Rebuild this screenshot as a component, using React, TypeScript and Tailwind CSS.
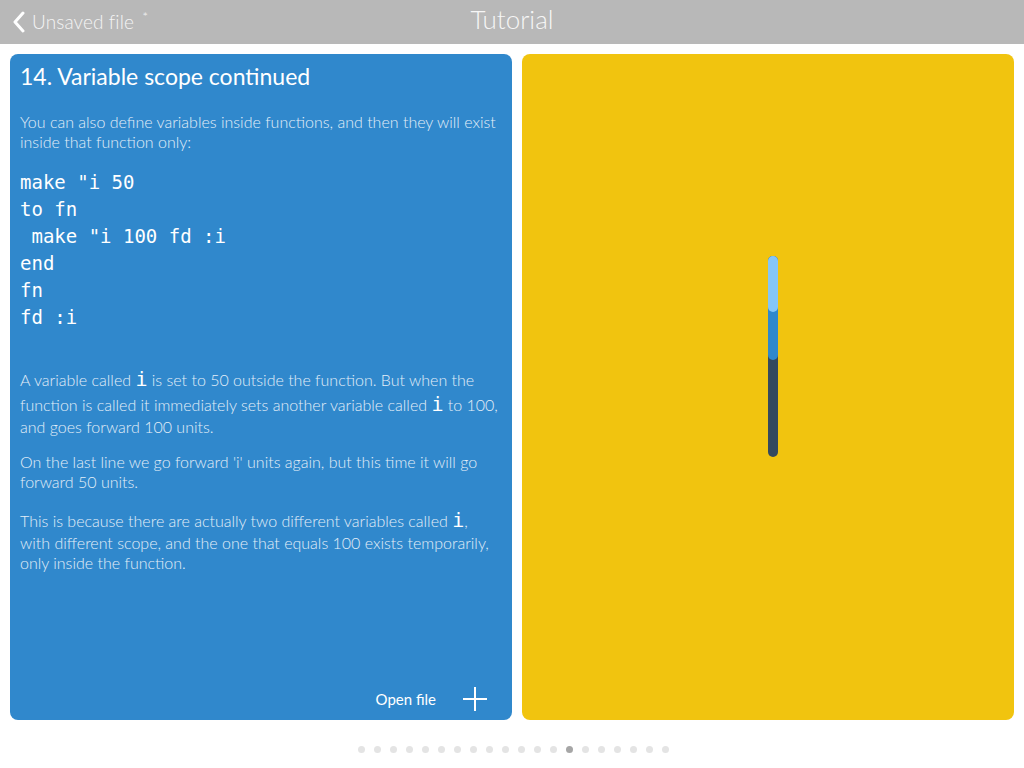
import React from "react";

const lato = { fontFamily: "Lato, 'Open Sans', sans-serif" };

function MonoI() {
  return (
    <span className="text-[20px] leading-[25px] text-white" style={{ fontFamily: "'DejaVu Sans Mono', monospace" }}>
      i
    </span>
  );
}

export default function App() {
  const dots = Array.from({ length: 20 }, (_, i) => i);
  return (
    <div className="w-[1024px] h-[768px] bg-white flex flex-col overflow-hidden" style={lato}>
      <header className="h-[44px] bg-[#b8b8b8] relative flex items-center shrink-0">
        <div className="flex items-center pl-[12px] gap-[6px] text-white/90">
          <svg width="14" height="22" viewBox="0 0 14 22">
            <path d="M11 2 L3 11 L11 20" fill="none" stroke="white" strokeWidth="3" strokeLinecap="round" strokeLinejoin="round" />
          </svg>
          <span className="text-[19px] font-light text-[#f4f4f4] tracking-[0.1px]">Unsaved file <span className="text-[14px] align-top relative top-[-2px] ml-[3px]">*</span></span>
        </div>
        <div className="absolute inset-0 flex items-center justify-center pointer-events-none">
          <span className="text-[26px] font-light text-[#f6f6f6] mt-[-6px]">Tutorial</span>
        </div>
      </header>
      <main className="flex gap-[10px] px-[10px] pt-[10px] h-[676px]">
        <section className="w-[502px] h-full rounded-[8px] bg-[#3088cc] flex flex-col pl-[10px] pr-[13px]">
          <h1 className="text-[23px] font-normal text-white mt-[8px] leading-[28px]">14. Variable scope continued</h1>
          <p className="text-[16px] font-light text-[#e3eef8] leading-[20px] mt-[22px]">
            You can also define variables inside functions, and then they will exist inside that function only:
          </p>
          <pre className="text-[19px] text-white leading-[27px] mt-[17px]" style={{ fontFamily: "'DejaVu Sans Mono', monospace" }}>
{`make "i 50
to fn
 make "i 100 fd :i
end
fn
fd :i`}
          </pre>
          <p className="text-[16px] font-light text-[#e3eef8] leading-[20px] mt-[36px]">
            A variable called <MonoI /> is set to 50 outside the function. But when the function is called it immediately sets another variable called <MonoI /> to 100, and goes forward 100 units.
          </p>
          <p className="text-[16px] font-light text-[#e3eef8] leading-[20px] mt-[15px]">
            On the last line we go forward 'i' units again, but this time it will go forward 50 units.
          </p>
          <p className="text-[16px] font-light text-[#e3eef8] leading-[20px] mt-[16px]">
            This is because there are actually two different variables called <MonoI />, with different scope, and the one that equals 100 exists temporarily, only inside the function.
          </p>
          <div className="mt-auto mb-[8px] flex items-center justify-end gap-[26px] pr-[11px]">
            <span className="text-[15px] text-white">Open file</span>
            <svg width="26" height="26" viewBox="0 0 26 26">
              <path d="M13 1 V25 M1 13 H25" stroke="white" strokeWidth="2" />
            </svg>
          </div>
        </section>
        <section className="w-[492px] h-full rounded-[8px] bg-[#f1c40f] relative">
          <svg className="absolute left-[244px] top-[200px]" width="14" height="206" viewBox="0 0 14 206">
            <line x1="7" y1="7" x2="7" y2="198" stroke="#34495e" strokeWidth="10" strokeLinecap="round" />
            <line x1="7" y1="7" x2="7" y2="101" stroke="#3088cc" strokeWidth="10" strokeLinecap="round" />
            <line x1="7" y1="7" x2="7" y2="53" stroke="#85c6f8" strokeWidth="10" strokeLinecap="round" />
          </svg>
        </section>
      </main>
      <div className="flex justify-center gap-[9px] mt-[26px] pl-[3px]">
        {dots.map((i) => (
          <span key={i} className={`w-[7px] h-[7px] rounded-full ${i === 13 ? "bg-[#a6a6a6]" : "bg-[#e4e4e4]"}`} />
        ))}
      </div>
    </div>
  );
}
